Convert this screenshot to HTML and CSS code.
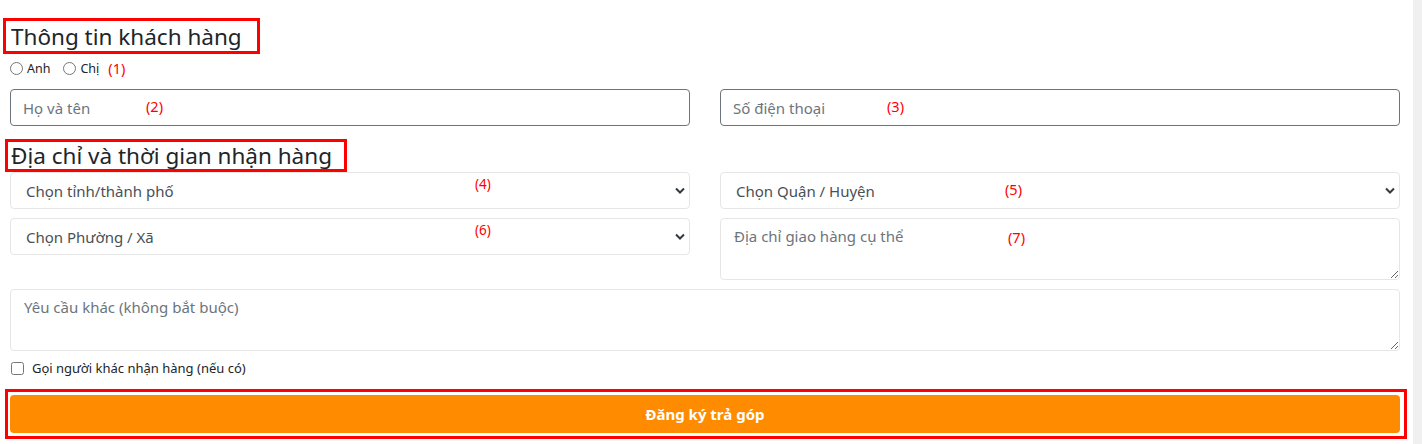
FILE: index.html
```html
<!DOCTYPE html>
<html lang="vi">
<head>
  <meta charset="UTF-8">
  <meta name="viewport" content="width=device-width, initial-scale=1.0">
  <title>Đăng ký trả góp</title>
  <link rel="stylesheet" href="styles.css">
</head>
<body>
  <div class="page">
    <form class="order-form">
      <!-- thông tin khách hàng -->
      <h4 class="title title-first">Thông tin khách hàng</h4>
      <div class="gender">
        <label><input type="radio" name="gender"> Anh</label>
        <label><input type="radio" name="gender"> Chị</label>
        <span class="mark">(1)</span>
      </div>
      <div class="row row-info">
        <div class="field">
          <input class="control" type="text" placeholder="Họ và tên">
          <span class="mark mark-mid" style="left: 136px">(2)</span>
        </div>
        <div class="field">
          <input class="control" type="text" placeholder="Số điện thoại">
          <span class="mark mark-mid" style="left: 167px">(3)</span>
        </div>
      </div>

      <!-- địa chỉ -->
      <h4 class="title title-second">Địa chỉ và thời gian nhận hàng</h4>
      <div class="row">
        <div class="field">
          <select class="control soft">
            <option>Chọn tỉnh/thành phố</option>
          </select>
          <svg class="chevron" viewBox="0 0 10 6"><path d="M1 1l4 4 4-4"/></svg>
          <span class="mark mark-top" style="left: 465px">(4)</span>
        </div>
        <div class="field">
          <select class="control soft">
            <option>Chọn Quận / Huyện</option>
          </select>
          <svg class="chevron" viewBox="0 0 10 6"><path d="M1 1l4 4 4-4"/></svg>
          <span class="mark mark-mid" style="left: 285px">(5)</span>
        </div>
      </div>
      <div class="row">
        <div class="field field-top">
          <select class="control soft">
            <option>Chọn Phường / Xã</option>
          </select>
          <svg class="chevron" viewBox="0 0 10 6"><path d="M1 1l4 4 4-4"/></svg>
          <span class="mark mark-top" style="left: 465px">(6)</span>
        </div>
        <div class="field">
          <textarea class="control soft area" placeholder="Địa chỉ giao hàng cụ thể"></textarea>
          <span class="mark" style="left: 288px; top: 9px">(7)</span>
        </div>
      </div>
      <textarea class="control soft area" placeholder="Yêu cầu khác (không bắt buộc)"></textarea>

      <label class="check">
        <input type="checkbox"> Gọi người khác nhận hàng (nếu có)
      </label>

      <div class="submit-box">
        <button type="button" class="submit">Đăng ký trả góp</button>
      </div>
    </form>
    <div class="scroll-track"></div>
  </div>
</body>
</html>
```

FILE: styles.css
```css
* { box-sizing: border-box; margin: 0; padding: 0; }

body {
  font-family: 'Noto Sans', 'Open Sans', sans-serif;
  color: #212529;
  background: #fff;
}

.page {
  display: flex;
  min-height: 444px;
}

.order-form {
  flex: 1;
  padding: 0 13px 0 10px;
}

.scroll-track {
  width: 9px;
  background: #f0f0f0;
}

/* tiêu đề có khung đỏ */
.title {
  display: inline-block;
  font-size: 22.5px;
  font-weight: 400;
  color: #212529;
  border: 3px solid #ff0000;
  margin-left: -7px;
  padding: 1px 15px 0 5px;
  line-height: 29px;
}

.title-first { margin-top: 18px; }

.title-second {
  margin-top: 13px;
  margin-left: -5px;
  padding: 0 9px 0 3px;
  line-height: 27px;
  display: block;
  width: 342px;
  position: relative;
  z-index: 1;
}

.gender {
  display: flex;
  align-items: center;
  gap: 13px;
  height: 20px;
  margin-top: 4px;
  font-size: 12.5px;
}

.gender label {
  display: flex;
  align-items: center;
  gap: 4px;
}

.gender .mark { margin-left: -4px; }

.gender input, .check input {
  width: 13px;
  height: 13px;
  margin: 0;
}

.mark {
  color: #ff0000;
  font-size: 14.5px;
}

.row {
  display: grid;
  grid-template-columns: 1fr 1fr;
  gap: 30px;
  margin-bottom: 9px;
}

.row-info {
  margin-top: 11px;
  margin-bottom: 0;
}

.field {
  position: relative;
}

.field .mark {
  position: absolute;
  margin: 0;
}

.mark-mid { top: 7px; font-size: 14.5px; }
.mark-top { top: 3px; font-size: 13.5px; }

.control {
  display: block;
  width: 100%;
  height: 37px;
  font-family: inherit;
  font-size: 15px;
  color: #495057;
  background: #fff;
  border: 1px solid #6c757d;
  border-radius: 4px;
  padding: 0 12px;
  outline: none;
}

.control::placeholder { color: #6c757d; opacity: 1; }

.soft { border-color: #e6e6e6; }

select.control {
  appearance: none;
  -webkit-appearance: none;
  padding-left: 15px;
  color: #495057;
}

.chevron {
  position: absolute;
  right: 5px;
  top: 15px;
  width: 10px;
  height: 7px;
  fill: none;
  stroke: #343a40;
  stroke-width: 2;
  pointer-events: none;
}

.area {
  height: 62px;
  padding: 7px 13px;
  resize: vertical;
}

.check {
  display: flex;
  align-items: center;
  gap: 8px;
  height: 20px;
  margin-top: 7px;
  padding-left: 1px;
  font-size: 13px;
}

.submit-box {
  margin: 11px -7px 0 -5px;
  border: 3px solid #ff0000;
  padding: 3px 4px 3px 2px;
}

.submit {
  display: block;
  width: 100%;
  height: 38px;
  background: #ff8c00;
  color: #fff;
  border: none;
  border-radius: 4px;
  font-family: inherit;
  font-size: 15px;
  font-weight: 700;
  cursor: pointer;
}
```
